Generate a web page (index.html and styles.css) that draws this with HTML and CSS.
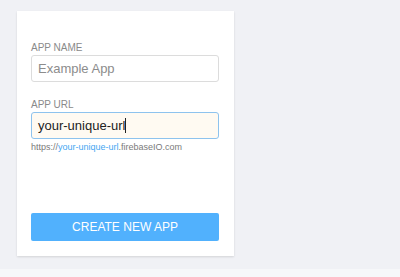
FILE: index.html
```html
<!DOCTYPE html>
<html lang="en">
<head>
    <meta charset="UTF-8">
    <meta name="viewport" content="width=device-width, initial-scale=1.0">
    <title>Create App</title>
    <link rel="stylesheet" href="styles.css">
</head>
<body>
    <div class="page">
        <form class="card">
            <div class="field">
                <label class="label" for="appName">APP NAME</label>
                <input class="input" id="appName" type="text" placeholder="Example App">
            </div>
            <div class="field">
                <label class="label" for="appUrl">APP URL</label>
                <div class="input input-active"><span>your-unique-url</span><span class="caret"></span></div>
                <div class="hint">https://<span class="hint-link">your-unique-url</span>.firebaseIO.com</div>
            </div>
            <button class="create-btn" type="button">CREATE NEW APP</button>
        </form>
    </div>
</body>
</html>
```

FILE: styles.css
```css
body {
    margin: 0;
    padding: 0;
    background: #f6f7f9;
    font-family: "Liberation Sans", Arial, sans-serif;
}

.page {
    height: 269px;
    padding: 11px 0 0 17px;
    box-sizing: border-box;
    background: #f0f1f5;
}

.card {
    width: 217px;
    height: 245px;
    box-sizing: border-box;
    background: #fff;
    box-shadow: 0 1px 2px rgba(0, 0, 0, 0.12);
    padding: 31px 15px 15px 14px;
    display: flex;
    flex-direction: column;
}

.field {
    margin-bottom: 17px;
}

.label {
    display: block;
    font-size: 10px;
    line-height: 12px;
    color: #8a8a8a;
    margin-bottom: 1px;
}

.input {
    display: flex;
    align-items: center;
    width: 100%;
    height: 27px;
    box-sizing: border-box;
    border: 1px solid #dcdcdc;
    border-radius: 3px;
    padding: 0 6px;
    font-family: "Liberation Sans", Arial, sans-serif;
    font-size: 13px;
    color: #222;
    background: #fff;
    outline: none;
}

.input::placeholder {
    color: #8c8c8c;
}

.input-active {
    border-color: #8ec3ee;
    background: #fffaf2;
}

.caret {
    display: inline-block;
    width: 1px;
    height: 15px;
    background: #222;
}

.hint {
    font-size: 9px;
    line-height: 11px;
    color: #7a7a7a;
    margin-top: 3px;
}

.hint-link {
    color: #45a6f2;
}

.create-btn {
    margin-top: auto;
    height: 28px;
    width: 100%;
    border: 0;
    border-radius: 2px;
    background: #51b1fd;
    color: #fff;
    font-family: "Liberation Sans", Arial, sans-serif;
    font-size: 12px;
}
```
